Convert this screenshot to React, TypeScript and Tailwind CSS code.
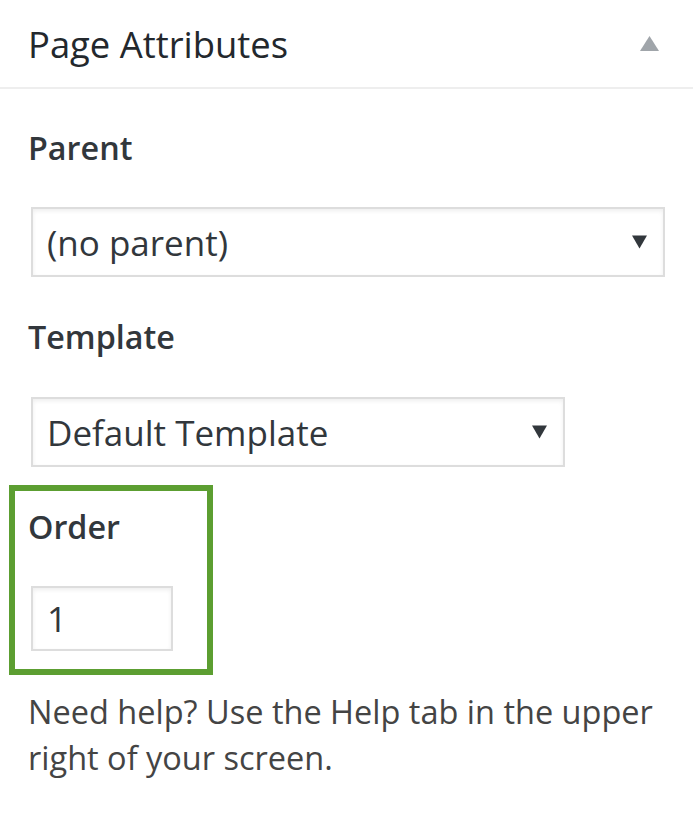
const Caret = ({ className }: { className: string }) => (
  <svg viewBox="0 0 16 14" className={className} aria-hidden="true">
    <polygon points="0,0 16,0 8,14" fill="currentColor" />
  </svg>
);

const SelectBox = ({ value, width }: { value: string; width: string }) => (
  <div
    className={`${width} ml-[3px] h-[70px] border-2 border-[#dddddd] bg-white shadow-[inset_0_2px_4px_rgba(0,0,0,0.07)] flex items-center justify-between pl-[14px] pr-[16px]`}
  >
    <span className="text-[35px] leading-none text-[#32373c]">{value}</span>
    <Caret className="w-[15px] h-[14px] text-[#32373c]" />
  </div>
);

export default function App() {
  return (
    <div className="w-[693px] h-[813px] overflow-hidden bg-white font-['Open_Sans',sans-serif] text-[#444444]">
      {/* Header */}
      <div className="h-[89px] border-b-2 border-[#eeeeee] flex items-center justify-between pl-[28px] pr-[34px]">
        <h2 className="text-[36.4px] leading-[44px] font-normal text-[#23282d]">Page Attributes</h2>
        <svg viewBox="0 0 19 15" className="w-[19px] h-[15px] text-[#a0a5aa]" aria-hidden="true">
          <polygon points="9.5,0 19,15 0,15" fill="currentColor" />
        </svg>
      </div>

      {/* Body */}
      <div className="px-[28px]">
        <p className="mt-[37px] text-[32.3px] leading-[42px] font-semibold text-[#32373c]">Parent</p>
        <div className="mt-[39px]">
          <SelectBox value="(no parent)" width="w-[634px]" />
        </div>

        <p className="mt-[38px] text-[32.3px] leading-[42px] font-semibold text-[#32373c]">Template</p>
        <div className="mt-[40px]">
          <SelectBox value="Default Template" width="w-[534px]" />
        </div>
      </div>

      {/* Highlighted order field */}
      <div className="mt-[18px] ml-[9px] w-[204px] border-[6px] border-[#5c9e31] pt-[14px] pl-[13px] pb-[18px]">
        <p className="text-[32.3px] leading-[42px] font-semibold text-[#32373c]">Order</p>
        <div className="mt-[39px] ml-[3px] w-[142px] h-[65px] border-2 border-[#dddddd] shadow-[inset_0_2px_4px_rgba(0,0,0,0.07)] flex items-center pl-[14px]">
          <span className="text-[35px] leading-none text-[#32373c]">1</span>
        </div>
      </div>

      <p className="mt-[14px] px-[28px] text-[32.5px] leading-[46px] text-[#444444]">
        Need help? Use the Help tab in the upper right of your screen.
      </p>
    </div>
  );
}
